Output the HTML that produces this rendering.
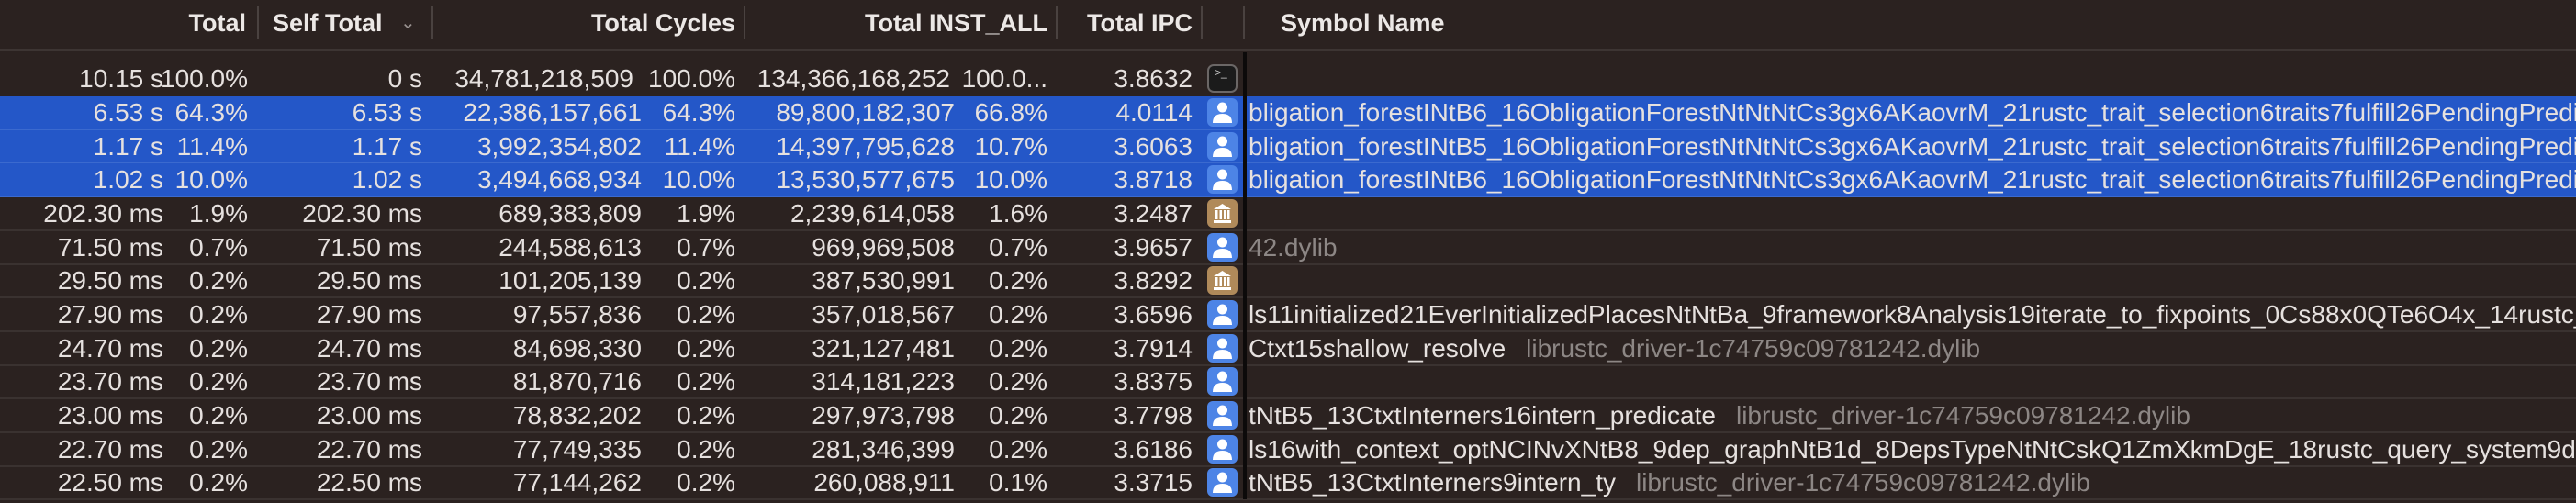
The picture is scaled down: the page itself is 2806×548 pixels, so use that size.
<!DOCTYPE html>
<html><head><meta charset="utf-8"><style>
*{margin:0;padding:0;box-sizing:border-box}
body{width:2806px;height:544px;background:#2b2220;overflow:hidden;position:relative;font-family:"Liberation Sans",sans-serif;font-size:28px;color:#e6e1df}
.hd{position:absolute;top:0;left:0;width:2806px;height:53px;background:#2b2220}
.hl{position:absolute;top:53px;left:0;width:2806px;height:3px;background:#3d3533}
.h{position:absolute;top:9px;line-height:32px;font-weight:bold;color:#ece8e6;white-space:nowrap;font-size:27px}
.vs{position:absolute;top:7px;height:36px;width:2px;background:#4a4240}
.r{position:absolute;left:0;width:2806px;height:37px;border-bottom:2px solid #3a3230}
.r.s{background:#2457c8;border-bottom:2px solid #3b6acf}
.c{position:absolute;top:0;line-height:35px;text-align:right;white-space:nowrap}
.sym{position:absolute;left:1360px;top:0;line-height:35px;white-space:nowrap;overflow:hidden;width:1446px}
.g{color:#8d8785;margin-left:22px}
.ic{position:absolute;left:1315px;top:2px;width:33px;height:31px;border-radius:6px}
.u{background:#4d84e6}
.l{background:#b08a5a}
.t{background:#1b1b1b;border:2px solid #6b6766;border-radius:7px}
.vb{position:absolute;left:1354px;top:57px;width:4px;height:487px;background:#0c0a0a}
</style></head><body>
<div class="hd"></div>
<div class="h" style="left:170px;width:98px;text-align:right">Total</div>
<div class="vs" style="left:280px"></div>
<div class="h" style="left:297px">Self Total</div>
<div class="h" style="left:436px;font-weight:normal;color:#9a9391;font-size:20px">&#8964;</div>
<div class="vs" style="left:470px"></div>
<div class="h" style="left:560px;width:241px;text-align:right">Total Cycles</div>
<div class="vs" style="left:810px"></div>
<div class="h" style="left:860px;width:281px;text-align:right">Total INST_ALL</div>
<div class="vs" style="left:1150px"></div>
<div class="h" style="left:1150px;width:149px;text-align:right">Total IPC</div>
<div class="vs" style="left:1308px"></div>
<div class="vs" style="left:1354px"></div>
<div class="h" style="left:1395px">Symbol Name</div>
<div class="hl"></div>

<div class="r" style="top:68px;border-bottom:none"><span class="c" style="left:0;width:178px">10.15 s</span><span class="c" style="left:0;width:270px">100.0%</span><span class="c" style="left:0;width:460px">0 s</span><span class="c" style="left:0;width:690px">34,781,218,509</span><span class="c" style="left:0;width:801px">100.0%</span><span class="c" style="left:0;width:1035px">134,366,168,252</span><span class="c" style="left:0;width:1141px">100.0...</span><span class="c" style="left:0;width:1299px">3.8632</span><div class="ic t"><span style="position:absolute;left:6px;top:-3px;font-size:12px;line-height:20px;color:#ccc">&gt;_</span></div></div>

<div class="r s" style="top:105px"><span class="c" style="left:0;width:178px">6.53 s</span><span class="c" style="left:0;width:270px">64.3%</span><span class="c" style="left:0;width:460px">6.53 s</span><span class="c" style="left:0;width:699px">22,386,157,661</span><span class="c" style="left:0;width:801px">64.3%</span><span class="c" style="left:0;width:1040px">89,800,182,307</span><span class="c" style="left:0;width:1141px">66.8%</span><span class="c" style="left:0;width:1299px">4.0114</span><div class="ic u"><svg width="33" height="31"><circle cx="16.5" cy="10" r="5.5" fill="#fff"/><path d="M6 27 Q6 17 16.5 17 Q27 17 27 27 Z" fill="#fff"/></svg></div><span class="sym">bligation_forestINtB6_16ObligationForestNtNtNtCs3gx6AKaovrM_21rustc_trait_selection6traits7fulfill26PendingPredicateObligation</span></div>
<div class="r s" style="top:142px"><span class="c" style="left:0;width:178px">1.17 s</span><span class="c" style="left:0;width:270px">11.4%</span><span class="c" style="left:0;width:460px">1.17 s</span><span class="c" style="left:0;width:699px">3,992,354,802</span><span class="c" style="left:0;width:801px">11.4%</span><span class="c" style="left:0;width:1040px">14,397,795,628</span><span class="c" style="left:0;width:1141px">10.7%</span><span class="c" style="left:0;width:1299px">3.6063</span><div class="ic u"><svg width="33" height="31"><circle cx="16.5" cy="10" r="5.5" fill="#fff"/><path d="M6 27 Q6 17 16.5 17 Q27 17 27 27 Z" fill="#fff"/></svg></div><span class="sym">bligation_forestINtB5_16ObligationForestNtNtNtCs3gx6AKaovrM_21rustc_trait_selection6traits7fulfill26PendingPredicateObligation</span></div>
<div class="r s" style="top:178px;height:37px"><span class="c" style="left:0;width:178px">1.02 s</span><span class="c" style="left:0;width:270px">10.0%</span><span class="c" style="left:0;width:460px">1.02 s</span><span class="c" style="left:0;width:699px">3,494,668,934</span><span class="c" style="left:0;width:801px">10.0%</span><span class="c" style="left:0;width:1040px">13,530,577,675</span><span class="c" style="left:0;width:1141px">10.0%</span><span class="c" style="left:0;width:1299px">3.8718</span><div class="ic u"><svg width="33" height="31"><circle cx="16.5" cy="10" r="5.5" fill="#fff"/><path d="M6 27 Q6 17 16.5 17 Q27 17 27 27 Z" fill="#fff"/></svg></div><span class="sym">bligation_forestINtB6_16ObligationForestNtNtNtCs3gx6AKaovrM_21rustc_trait_selection6traits7fulfill26PendingPredicateObligation</span></div>

<div class="r" style="top:215px"><span class="c" style="left:0;width:178px">202.30 ms</span><span class="c" style="left:0;width:270px">1.9%</span><span class="c" style="left:0;width:460px">202.30 ms</span><span class="c" style="left:0;width:699px">689,383,809</span><span class="c" style="left:0;width:801px">1.9%</span><span class="c" style="left:0;width:1040px">2,239,614,058</span><span class="c" style="left:0;width:1141px">1.6%</span><span class="c" style="left:0;width:1299px">3.2487</span><div class="ic l"><svg width="33" height="31"><path d="M7 11 L16.5 5 L26 11 Z" fill="#fff"/><rect x="9" y="12" width="2.5" height="10" fill="#fff"/><rect x="13.5" y="12" width="2.5" height="10" fill="#fff"/><rect x="18" y="12" width="2.5" height="10" fill="#fff"/><rect x="22" y="12" width="2.5" height="10" fill="#fff"/><rect x="7" y="23" width="19" height="3" fill="#fff"/></svg></div></div>
<div class="r" style="top:252px"><span class="c" style="left:0;width:178px">71.50 ms</span><span class="c" style="left:0;width:270px">0.7%</span><span class="c" style="left:0;width:460px">71.50 ms</span><span class="c" style="left:0;width:699px">244,588,613</span><span class="c" style="left:0;width:801px">0.7%</span><span class="c" style="left:0;width:1040px">969,969,508</span><span class="c" style="left:0;width:1141px">0.7%</span><span class="c" style="left:0;width:1299px">3.9657</span><div class="ic u"><svg width="33" height="31"><circle cx="16.5" cy="10" r="5.5" fill="#fff"/><path d="M6 27 Q6 17 16.5 17 Q27 17 27 27 Z" fill="#fff"/></svg></div><span class="sym" style="color:#8d8785">42.dylib</span></div>
<div class="r" style="top:288px"><span class="c" style="left:0;width:178px">29.50 ms</span><span class="c" style="left:0;width:270px">0.2%</span><span class="c" style="left:0;width:460px">29.50 ms</span><span class="c" style="left:0;width:699px">101,205,139</span><span class="c" style="left:0;width:801px">0.2%</span><span class="c" style="left:0;width:1040px">387,530,991</span><span class="c" style="left:0;width:1141px">0.2%</span><span class="c" style="left:0;width:1299px">3.8292</span><div class="ic l"><svg width="33" height="31"><path d="M7 11 L16.5 5 L26 11 Z" fill="#fff"/><rect x="9" y="12" width="2.5" height="10" fill="#fff"/><rect x="13.5" y="12" width="2.5" height="10" fill="#fff"/><rect x="18" y="12" width="2.5" height="10" fill="#fff"/><rect x="22" y="12" width="2.5" height="10" fill="#fff"/><rect x="7" y="23" width="19" height="3" fill="#fff"/></svg></div></div>
<div class="r" style="top:325px"><span class="c" style="left:0;width:178px">27.90 ms</span><span class="c" style="left:0;width:270px">0.2%</span><span class="c" style="left:0;width:460px">27.90 ms</span><span class="c" style="left:0;width:699px">97,557,836</span><span class="c" style="left:0;width:801px">0.2%</span><span class="c" style="left:0;width:1040px">357,018,567</span><span class="c" style="left:0;width:1141px">0.2%</span><span class="c" style="left:0;width:1299px">3.6596</span><div class="ic u"><svg width="33" height="31"><circle cx="16.5" cy="10" r="5.5" fill="#fff"/><path d="M6 27 Q6 17 16.5 17 Q27 17 27 27 Z" fill="#fff"/></svg></div><span class="sym">ls11initialized21EverInitializedPlacesNtNtBa_9framework8Analysis19iterate_to_fixpoints_0Cs88x0QTe6O4x_14rustc_borrowck</span></div>
<div class="r" style="top:362px"><span class="c" style="left:0;width:178px">24.70 ms</span><span class="c" style="left:0;width:270px">0.2%</span><span class="c" style="left:0;width:460px">24.70 ms</span><span class="c" style="left:0;width:699px">84,698,330</span><span class="c" style="left:0;width:801px">0.2%</span><span class="c" style="left:0;width:1040px">321,127,481</span><span class="c" style="left:0;width:1141px">0.2%</span><span class="c" style="left:0;width:1299px">3.7914</span><div class="ic u"><svg width="33" height="31"><circle cx="16.5" cy="10" r="5.5" fill="#fff"/><path d="M6 27 Q6 17 16.5 17 Q27 17 27 27 Z" fill="#fff"/></svg></div><span class="sym">Ctxt15shallow_resolve<span class="g">librustc_driver-1c74759c09781242.dylib</span></span></div>
<div class="r" style="top:398px"><span class="c" style="left:0;width:178px">23.70 ms</span><span class="c" style="left:0;width:270px">0.2%</span><span class="c" style="left:0;width:460px">23.70 ms</span><span class="c" style="left:0;width:699px">81,870,716</span><span class="c" style="left:0;width:801px">0.2%</span><span class="c" style="left:0;width:1040px">314,181,223</span><span class="c" style="left:0;width:1141px">0.2%</span><span class="c" style="left:0;width:1299px">3.8375</span><div class="ic u"><svg width="33" height="31"><circle cx="16.5" cy="10" r="5.5" fill="#fff"/><path d="M6 27 Q6 17 16.5 17 Q27 17 27 27 Z" fill="#fff"/></svg></div></div>
<div class="r" style="top:435px"><span class="c" style="left:0;width:178px">23.00 ms</span><span class="c" style="left:0;width:270px">0.2%</span><span class="c" style="left:0;width:460px">23.00 ms</span><span class="c" style="left:0;width:699px">78,832,202</span><span class="c" style="left:0;width:801px">0.2%</span><span class="c" style="left:0;width:1040px">297,973,798</span><span class="c" style="left:0;width:1141px">0.2%</span><span class="c" style="left:0;width:1299px">3.7798</span><div class="ic u"><svg width="33" height="31"><circle cx="16.5" cy="10" r="5.5" fill="#fff"/><path d="M6 27 Q6 17 16.5 17 Q27 17 27 27 Z" fill="#fff"/></svg></div><span class="sym">tNtB5_13CtxtInterners16intern_predicate<span class="g">librustc_driver-1c74759c09781242.dylib</span></span></div>
<div class="r" style="top:472px"><span class="c" style="left:0;width:178px">22.70 ms</span><span class="c" style="left:0;width:270px">0.2%</span><span class="c" style="left:0;width:460px">22.70 ms</span><span class="c" style="left:0;width:699px">77,749,335</span><span class="c" style="left:0;width:801px">0.2%</span><span class="c" style="left:0;width:1040px">281,346,399</span><span class="c" style="left:0;width:1141px">0.2%</span><span class="c" style="left:0;width:1299px">3.6186</span><div class="ic u"><svg width="33" height="31"><circle cx="16.5" cy="10" r="5.5" fill="#fff"/><path d="M6 27 Q6 17 16.5 17 Q27 17 27 27 Z" fill="#fff"/></svg></div><span class="sym">ls16with_context_optNCINvXNtB8_9dep_graphNtB1d_8DepsTypeNtNtCskQ1ZmXkmDgE_18rustc_query_system9dep_graph</span></div>
<div class="r" style="top:508px"><span class="c" style="left:0;width:178px">22.50 ms</span><span class="c" style="left:0;width:270px">0.2%</span><span class="c" style="left:0;width:460px">22.50 ms</span><span class="c" style="left:0;width:699px">77,144,262</span><span class="c" style="left:0;width:801px">0.2%</span><span class="c" style="left:0;width:1040px">260,088,911</span><span class="c" style="left:0;width:1141px">0.1%</span><span class="c" style="left:0;width:1299px">3.3715</span><div class="ic u"><svg width="33" height="31"><circle cx="16.5" cy="10" r="5.5" fill="#fff"/><path d="M6 27 Q6 17 16.5 17 Q27 17 27 27 Z" fill="#fff"/></svg></div><span class="sym">tNtB5_13CtxtInterners9intern_ty<span class="g">librustc_driver-1c74759c09781242.dylib</span></span></div>

<div class="vb"></div>
</body></html>
